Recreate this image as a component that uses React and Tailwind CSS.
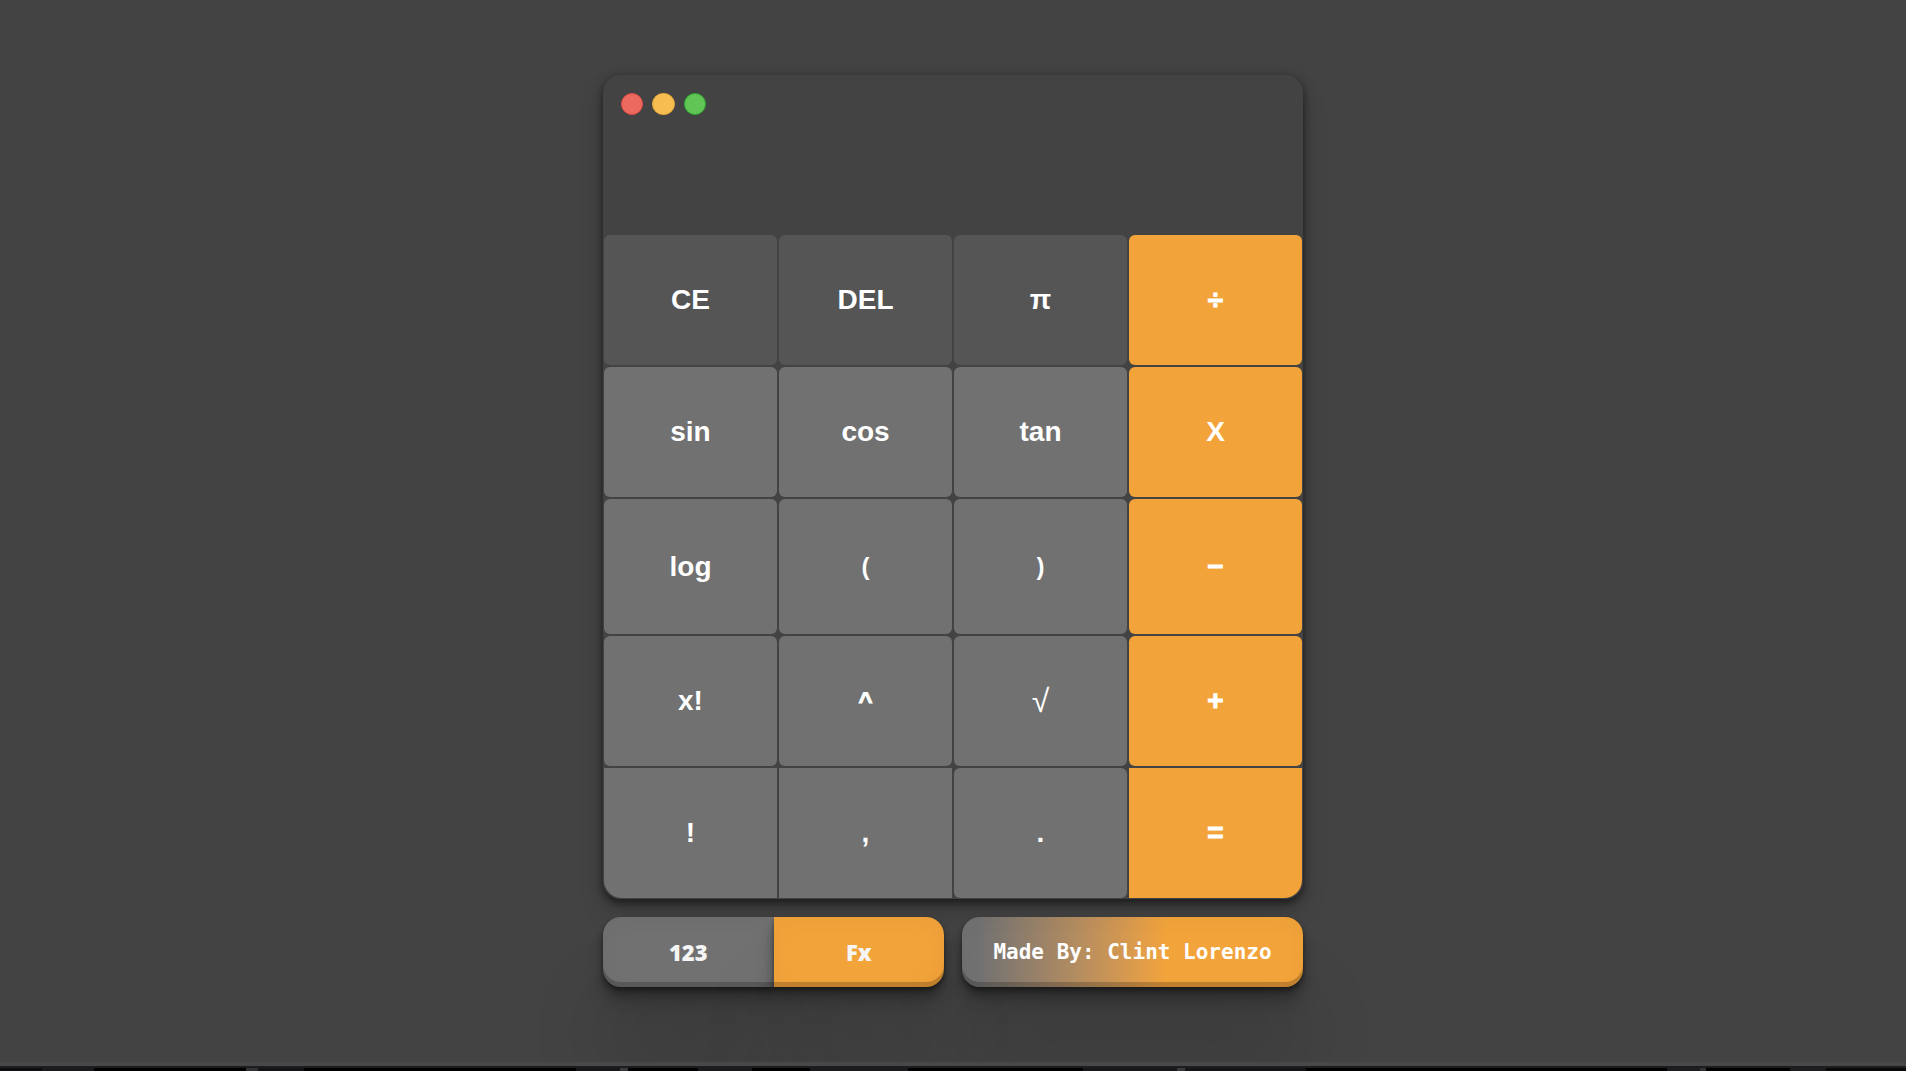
import React from "react";

const keyBase =
  "flex items-center justify-center leading-8 text-white cursor-pointer";

const faces = {
  sans: "font-['Liberation_Sans',Arial,sans-serif] text-[28px] font-bold",
  paren: "font-['Liberation_Sans',Arial,sans-serif] text-2xl font-bold",
  root: "font-['Liberation_Sans',Arial,sans-serif] text-[32px] font-normal",
  caret: "font-['Liberation_Sans',Arial,sans-serif] text-2xl font-bold [-webkit-text-stroke:1px_white]",
  heavy: "font-['Liberation_Sans',Arial,sans-serif] text-[28px] font-bold [-webkit-text-stroke:1px_white]",
};

const tones = {
  dark: "bg-[#555555]",
  gray: "bg-[#717171]",
  orange: "bg-[#f2a33a]",
};

const keys = [
  { label: "CE", tone: "dark" },
  { label: "DEL", tone: "dark" },
  { label: "π", tone: "dark" },
  { label: "÷", tone: "orange", face: "heavy" },
  { label: "sin", tone: "gray" },
  { label: "cos", tone: "gray" },
  { label: "tan", tone: "gray" },
  { label: "X", tone: "orange" },
  { label: "log", tone: "gray" },
  { label: "(", tone: "gray", face: "paren" },
  { label: ")", tone: "gray", face: "paren" },
  { label: "−", tone: "orange", face: "heavy" },
  { label: "x!", tone: "gray" },
  { label: "^", tone: "gray", face: "caret" },
  { label: "√", tone: "gray", face: "root" },
  { label: "+", tone: "orange", face: "heavy" },
  { label: "!", tone: "gray", shape: "rounded-bl-[18px]" },
  { label: ",", tone: "gray", shape: "rounded-none" },
  { label: ".", tone: "gray" },
  { label: "=", tone: "orange", shape: "rounded-br-[18px]", face: "heavy" },
];

function Key({ label, tone, shape = "rounded-md", face = "sans" }) {
  return (
    <button type="button" className={`${keyBase} ${faces[face]} ${tones[tone]} ${shape}`}>
      {label}
    </button>
  );
}

const raised =
  "shadow-[0_3px_4px_rgba(0,0,0,0.35),0_7px_8px_rgba(0,0,0,0.2),0_13px_14px_rgba(0,0,0,0.14),0_22px_22px_rgba(0,0,0,0.08),0_80px_80px_rgba(0,0,0,0.13),inset_0_-5px_0_rgba(0,0,0,0.2),inset_0_4px_20px_rgba(0,0,0,0.03)]";

/* Dark ledge along the bottom edge: relative width and shade of each piece. */
const ledge = [
  ["grow-[42]", "bg-[#0e0e10]"],
  ["grow-[52]", "bg-[#1b1b1e]"],
  ["grow-[152]", "bg-black"],
  ["grow-[12]", "bg-[#333335]"],
  ["grow-[46]", "bg-[#151517]"],
  ["grow-[272]", "bg-black"],
  ["grow-[44]", "bg-[#18181a]"],
  ["grow-[8]", "bg-[#3a3a3c]"],
  ["grow-[70]", "bg-black"],
  ["grow-[54]", "bg-[#1b1b1e]"],
  ["grow-[58]", "bg-black"],
  ["grow-[98]", "bg-[#1c1c1e]"],
  ["grow-[175]", "bg-black"],
  ["grow-[94]", "bg-[#17181a]"],
  ["grow-[8]", "bg-[#3a3a3c]"],
  ["grow-[121]", "bg-[#151517]"],
  ["grow-[361]", "bg-black"],
  ["grow-[33]", "bg-[#1d1d20]"],
  ["grow-[6]", "bg-[#333335]"],
  ["grow-[84]", "bg-black"],
  ["grow-[36]", "bg-[#1d1d20]"],
  ["grow-[80]", "bg-[#0a0a0b]"],
];

export default function App() {
  return (
    <div className="flex min-h-screen flex-col overflow-hidden bg-[#434343]">
      <main className="mx-auto flex w-full max-w-[700px] grow flex-col gap-[18px] pt-[75px]">
        <section
          aria-label="Calculator"
          className="rounded-[18px] bg-[#434343] px-px pb-px shadow-[0_3px_12px_rgba(0,0,0,0.3),0_4px_6px_rgba(0,0,0,0.3),0_14px_24px_rgba(0,0,0,0.15)]"
        >
          <header className="flex h-40 items-start gap-[9px] px-[17px] pt-[18px]">
            <button type="button" aria-label="Close" className="size-[22px] rounded-full border border-[#e24b41] bg-[#ed6a5f]" />
            <button type="button" aria-label="Minimize" className="h-[22px] w-[23px] rounded-full border border-[#e1a73e] bg-[#f6be50]" />
            <button type="button" aria-label="Maximize" className="size-[22px] rounded-full border border-[#2dac2f] bg-[#61c555]" />
          </header>
          <div className="grid grid-cols-4 grid-rows-[130px_130px_135px_130px_130px] gap-0.5">
            {keys.map((key) => (
              <Key key={key.label} {...key} />
            ))}
          </div>
        </section>

        <div className="grid grid-cols-2 gap-[18px]">
          <div className="flex h-[70px] font-['Open_Sans',sans-serif] text-[22px] font-extrabold text-[#f5f5f5]">
            <button type="button" className={`flex-1 rounded-l-[18px] bg-[#717171] ${raised}`}>123</button>
            <button type="button" className={`flex-1 rounded-r-[18px] bg-[#f2a33a] ${raised}`}>Fx</button>
          </div>
          <a
            href="#author"
            className={`flex h-[70px] items-center justify-center rounded-[18px] bg-linear-to-r from-[#717171] from-5% to-[#f2a33a] to-60% pt-0.5 font-['DejaVu_Sans_Mono',monospace] text-[21px] font-bold text-white ${raised}`}
          >
            Made By: Clint Lorenzo
          </a>
        </div>
      </main>
      <footer className="relative border-t-4 border-[#494747]">
        <div className="h-0.5 bg-[#1c1d20]" />
        <div className="flex h-[3px]">
          {ledge.map(([width, shade], i) => (
            <span key={i} className={`basis-0 ${width} ${shade}`} />
          ))}
        </div>
      </footer>
    </div>
  );
}
